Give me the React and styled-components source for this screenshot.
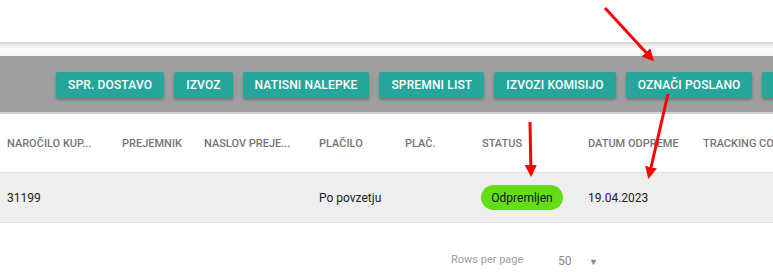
import React from "react";
import styled, { createGlobalStyle } from "styled-components";

const GlobalStyle = createGlobalStyle`
  body {
    margin: 0;
    background: #fff;
    font-family: Roboto, "Liberation Sans", sans-serif;
    overflow: hidden;
  }
`;

const columns = [
  "Naročilo kup...",
  "Prejemnik",
  "Naslov preje...",
  "Plačilo",
  "Plač.",
  "Status",
  "Datum odpreme",
  "Tracking code",
];

const actions = [
  "Spr. dostavo",
  "Izvoz",
  "Natisni nalepke",
  "Spremni list",
  "Izvozi komisijo",
  "Označi poslano",
  "Natisni",
];

function App() {
  return (
    <Page>
      <GlobalStyle />
      <TopSpace />
      <CardEdge />
      <Toolbar>
        {actions.map((a) => (
          <ActionButton key={a}>{a}</ActionButton>
        ))}
      </Toolbar>
      <Table>
        <HeadRow>
          {columns.map((c) => (
            <HeadCell key={c}>{c}</HeadCell>
          ))}
        </HeadRow>
        <Row>
          <Cell>31199</Cell>
          <Cell />
          <Cell />
          <Cell>Po povzetju</Cell>
          <Cell />
          <Cell>
            <StatusPill>Odpremljen</StatusPill>
          </Cell>
          <Cell>19.04.2023</Cell>
          <Cell />
        </Row>
      </Table>
      <Pagination>
        <PagerLabel>Rows per page</PagerLabel>
        <PagerValue>50</PagerValue>
        <PagerArrow>▼</PagerArrow>
      </Pagination>
      <Arrows width="773" height="280" viewBox="0 0 773 280">
        <defs>
          <marker
            id="head"
            markerWidth="4"
            markerHeight="4"
            refX="3"
            refY="2"
            orient="auto"
          >
            <path d="M0,0 L4,2 L0,4 z" fill="#ff0000" />
          </marker>
        </defs>
        <line x1="605" y1="8" x2="652" y2="59" stroke="#ff0000" strokeWidth="3" markerEnd="url(#head)" />
        <line x1="668" y1="94" x2="649" y2="176" stroke="#ff0000" strokeWidth="3" markerEnd="url(#head)" />
        <line x1="530" y1="122" x2="531" y2="174" stroke="#ff0000" strokeWidth="3" markerEnd="url(#head)" />
      </Arrows>
    </Page>
  );
}

const Page = styled.div`
  position: relative;
  width: 773px;
  height: 280px;
  overflow: hidden;
`;

const TopSpace = styled.div`
  height: 42px;
`;

const CardEdge = styled.div`
  height: 14px;
  border-top: 2px solid #d9d9d9;
  box-sizing: border-box;
  background: linear-gradient(#e6e6e6, #fbfbfb 45%, #f6f6f6);
`;

const Toolbar = styled.div`
  display: flex;
  gap: 10px;
  align-items: center;
  height: 56px;
  padding-left: 56px;
  background: #9e9e9e;
  border-bottom: 2px solid #d2d2d2;
  overflow: hidden;
`;

const ActionButton = styled.button`
  flex: none;
  height: 26px;
  padding: 0 12px;
  border: none;
  border-radius: 2px;
  background: #26a69a;
  color: #fff;
  font-family: Roboto, "Liberation Sans", sans-serif;
  font-size: 12px;
  font-weight: 500;
  text-transform: uppercase;
  letter-spacing: 0.15px;
  box-shadow: 0 2px 3px rgba(0, 0, 0, 0.25);
  margin-top: 1px;
`;

const Table = styled.div`
  display: grid;
  grid-template-columns: 115px 82px 115px 86px 77px 106px 115px 1fr;
`;

const HeadRow = styled.div`
  display: contents;
`;

const HeadCell = styled.div`
  height: 58px;
  display: flex;
  align-items: center;
  padding-left: 7px;
  font-size: 11px;
  font-weight: 500;
  color: #757575;
  text-transform: uppercase;
  white-space: nowrap;
  overflow: hidden;
  border-bottom: 1px solid #e0e0e0;
`;

const Row = styled.div`
  display: contents;
`;

const Cell = styled.div`
  height: 49px;
  display: flex;
  align-items: center;
  padding-left: 7px;
  background: #eeeeee;
  border-bottom: 1px solid #e0e0e0;
  font-size: 12px;
  color: #212121;
  white-space: nowrap;
`;

const StatusPill = styled.span`
  display: inline-flex;
  align-items: center;
  justify-content: center;
  height: 25px;
  width: 82px;
  border-radius: 13px;
  background: #64dd17;
  color: #111;
  font-size: 12px;
  margin-left: -1px;
`;

const Pagination = styled.div`
  display: flex;
  align-items: center;
  height: 30px;
  padding-top: 21px;
  padding-left: 451px;
  font-size: 11px;
  color: #9e9e9e;
`;

const PagerLabel = styled.span`
  width: 107px;
`;

const PagerValue = styled.span`
  width: 31px;
  font-size: 12px;
  color: #8a8a8a;
  margin-top: 3px;
`;

const PagerArrow = styled.span`
  font-size: 9px;
  color: #8a8a8a;
  margin-top: 5px;
`;

const Arrows = styled.svg`
  position: absolute;
  left: 0;
  top: 0;
  pointer-events: none;
`;

export default App;
